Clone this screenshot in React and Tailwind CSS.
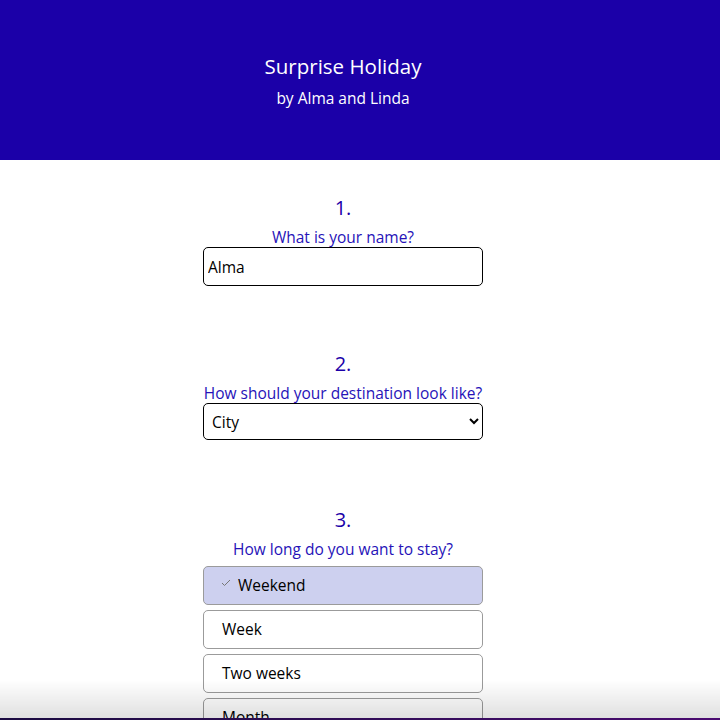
import React, { useState } from 'react';

const durations = ['Weekend', 'Week', 'Two weeks', 'Month'];

const Step = ({ number, label, className = '', children }) => (
  <section className={`flex flex-col items-center ${className}`}>
    <h2 className="text-[20px] leading-[30px] text-[#1b00a8]">{number}</h2>
    <p className="text-[15.5px] leading-[20px] text-[#2612b8] mt-[4px]">{label}</p>
    {children}
  </section>
);

export default function App() {
  const [name, setName] = useState('Alma');
  const [look, setLook] = useState('City');
  const [stay, setStay] = useState('Weekend');

  return (
    <div className="min-h-screen bg-white font-['Open_Sans',sans-serif] text-black">
      {/* Header */}
      <header className="h-[160px] bg-[#1b00a8] flex flex-col items-center justify-center text-white pr-[34px]">
        <h1 className="text-[20.5px] leading-[28px]">Surprise Holiday</h1>
        <p className="text-[15.5px] leading-[20px] mt-[8px]">by Alma and Linda</p>
      </header>

      <main className="flex flex-col items-center pt-[33px] pb-[120px] gap-[63px] pr-[34px]">
        <Step number="1." label="What is your name?">
          <input
            value={name}
            onChange={(e) => setName(e.target.value)}
            className="w-[280px] h-[39px] border border-black rounded-[5px] px-[4px] text-[15.5px] outline-none"
          />
        </Step>

        <Step number="2." label="How should your destination look like?">
          <select
            value={look}
            onChange={(e) => setLook(e.target.value)}
            className="w-[280px] h-[37px] border border-black rounded-[5px] px-[4px] text-[15.5px] bg-white"
          >
            <option>City</option>
            <option>Beach</option>
            <option>Mountains</option>
          </select>
        </Step>

        <Step number="3." label="How long do you want to stay?" className="mt-[2px]">
          <div className="flex flex-col gap-[5px] mt-[7px]">
            {durations.map((d) => {
              const active = stay === d;
              return (
                <button
                  key={d}
                  onClick={() => setStay(d)}
                  className={`w-[280px] h-[39px] rounded-[5px] border border-[#9b9b9b] flex items-center text-left text-[15.5px] ${
                    active ? 'bg-[#cdd0ef] pl-[17px]' : 'bg-white pl-[18px]'
                  }`}
                >
                  {active && (
                    <svg width="10" height="8" viewBox="0 0 10 8" className="mr-[7px] mt-[-5px]">
                      <path d="M1 4 L3.5 6.5 L9 1" fill="none" stroke="#777" strokeWidth="1" />
                    </svg>
                  )}
                  {d}
                </button>
              );
            })}
          </div>
        </Step>
      </main>

      {/* bottom shade */}
      <div className="fixed bottom-0 left-0 right-0 h-[40px] pointer-events-none bg-gradient-to-b from-transparent to-black/[0.13]">
        <div className="absolute bottom-0 left-0 right-0 h-[2px] bg-gradient-to-r from-[#1a0a40] to-[#4a0a70]" />
      </div>
    </div>
  );
}
